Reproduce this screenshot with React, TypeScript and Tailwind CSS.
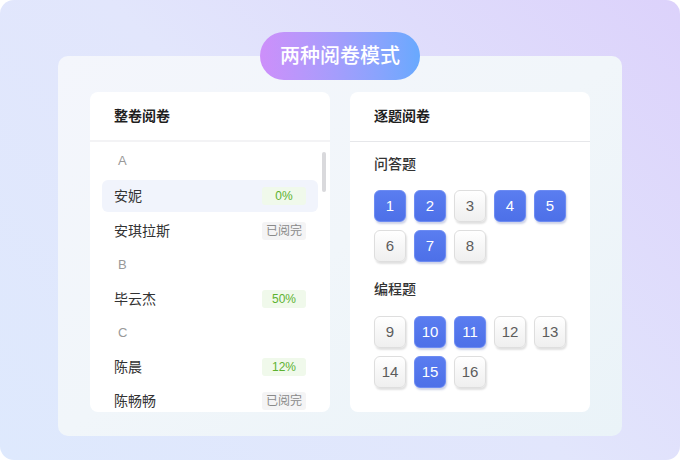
import React from "react";

type Entry =
  | { kind: "letter"; label: string }
  | { kind: "name"; label: string; status: string; done?: boolean; active?: boolean };

const entries: Entry[] = [
  { kind: "letter", label: "A" },
  { kind: "name", label: "安妮", status: "0%", active: true },
  { kind: "name", label: "安琪拉斯", status: "已阅完", done: true },
  { kind: "letter", label: "B" },
  { kind: "name", label: "毕云杰", status: "50%" },
  { kind: "letter", label: "C" },
  { kind: "name", label: "陈晨", status: "12%" },
  { kind: "name", label: "陈畅畅", status: "已阅完", done: true },
];

const qa = [1, 2, 3, 4, 5, 6, 7, 8];
const qaDone = [1, 2, 4, 5, 7];
const code = [9, 10, 11, 12, 13, 14, 15, 16];
const codeDone = [10, 11, 15];

function NumButton({ n, on }: { n: number; on: boolean }) {
  return (
    <div
      className={
        on
          ? "w-8 h-8 rounded-[6px] flex items-center justify-center text-[15px] text-white bg-linear-to-b from-[#5a7df0] to-[#4d70e8] border border-[#6c8bf2] shadow-[1px_2px_2px_rgba(60,80,160,0.25)]"
          : "w-8 h-8 rounded-[6px] flex items-center justify-center text-[15px] text-[#5c5c5c] bg-linear-to-b from-white to-[#efefef] border border-[#dedede] shadow-[1px_2px_2px_rgba(0,0,0,0.12)]"
      }
    >
      {n}
    </div>
  );
}

function WholePaper() {
  return (
    <div className="relative w-[240px] h-[320px] bg-white rounded-[8px] overflow-hidden flex flex-col">
      <div className="h-[50px] shrink-0 px-6 flex items-center border-b-2 border-[#f3f3f5] text-[14px] font-semibold text-[#1f1f1f]">
        整卷阅卷
      </div>
      <div className="flex flex-col pt-[3px] px-3">
        {entries.map((e, i) =>
          e.kind === "letter" ? (
            <div
              key={i}
              className={
                i === 0
                  ? "h-8 mb-[3px] pl-4 flex items-center text-[13px] text-[#999999]"
                  : "h-[34px] pl-4 flex items-center text-[13px] text-[#999999]"
              }
            >
              {e.label}
            </div>
          ) : (
            <div
              key={i}
              className={
                e.active
                  ? "h-8 mb-[2px] px-3 rounded-[6px] bg-[#f1f4fc] flex items-center justify-between"
                  : "h-[34px] px-3 flex items-center justify-between"
              }
            >
              <span className="text-[14px] text-[#333333]">{e.label}</span>
              <span
                className={
                  e.done
                    ? "w-11 h-[18px] rounded-[3px] bg-[#f4f4f5] text-[#8a8a8a] text-[12px] flex items-center justify-center"
                    : "w-11 h-[18px] rounded-[3px] bg-[#f0f9eb] text-[#5cb22f] text-[12px] flex items-center justify-center"
                }
              >
                {e.status}
              </span>
            </div>
          )
        )}
      </div>
      <div className="absolute left-[232px] top-[60px] w-[4px] h-[40px] rounded-full bg-[#d9d9dc]" />
    </div>
  );
}

function ByQuestion() {
  return (
    <div className="w-[240px] h-[320px] bg-white rounded-[8px] flex flex-col">
      <div className="h-[50px] shrink-0 px-6 flex items-center border-b border-[#e6e7ea] text-[14px] font-semibold text-[#1f1f1f]">
        逐题阅卷
      </div>
      <div className="px-6 pt-3">
        <div className="text-[14px] leading-5 text-[#333333] font-medium">问答题</div>
        <div className="mt-4 grid grid-cols-5 gap-2 w-[192px]">
          {qa.map((n) => (
            <NumButton key={n} n={n} on={qaDone.includes(n)} />
          ))}
        </div>
        <div className="mt-[17px] text-[14px] leading-5 text-[#333333] font-medium">编程题</div>
        <div className="mt-[17px] grid grid-cols-5 gap-2 w-[192px]">
          {code.map((n) => (
            <NumButton key={n} n={n} on={codeDone.includes(n)} />
          ))}
        </div>
      </div>
    </div>
  );
}

export default function App() {
  return (
    <div className="w-[680px] h-[460px] bg-white">
      <div
        className="w-[680px] h-[460px] rounded-[14px] bg-linear-45 from-[#dee9fd] via-[#e2e6fc] to-[#dcd2fb] flex flex-col items-center pt-8"
        style={{ fontFamily: '"Liberation Sans", "Noto Sans CJK SC", sans-serif' }}
      >
        <div className="relative z-10 w-[160px] h-12 rounded-full bg-linear-to-r from-[#cd8ffa] to-[#68a9fe] flex items-center justify-center text-white text-[20px] font-medium">
          两种阅卷模式
        </div>
        <div className="-mt-6 w-[564px] h-[380px] rounded-[10px] bg-linear-to-br from-[#f4f6fc] via-[#f1f6fa] to-[#eaf3f8] flex gap-5 pl-8 pt-9">
          <WholePaper />
          <ByQuestion />
        </div>
      </div>
    </div>
  );
}
